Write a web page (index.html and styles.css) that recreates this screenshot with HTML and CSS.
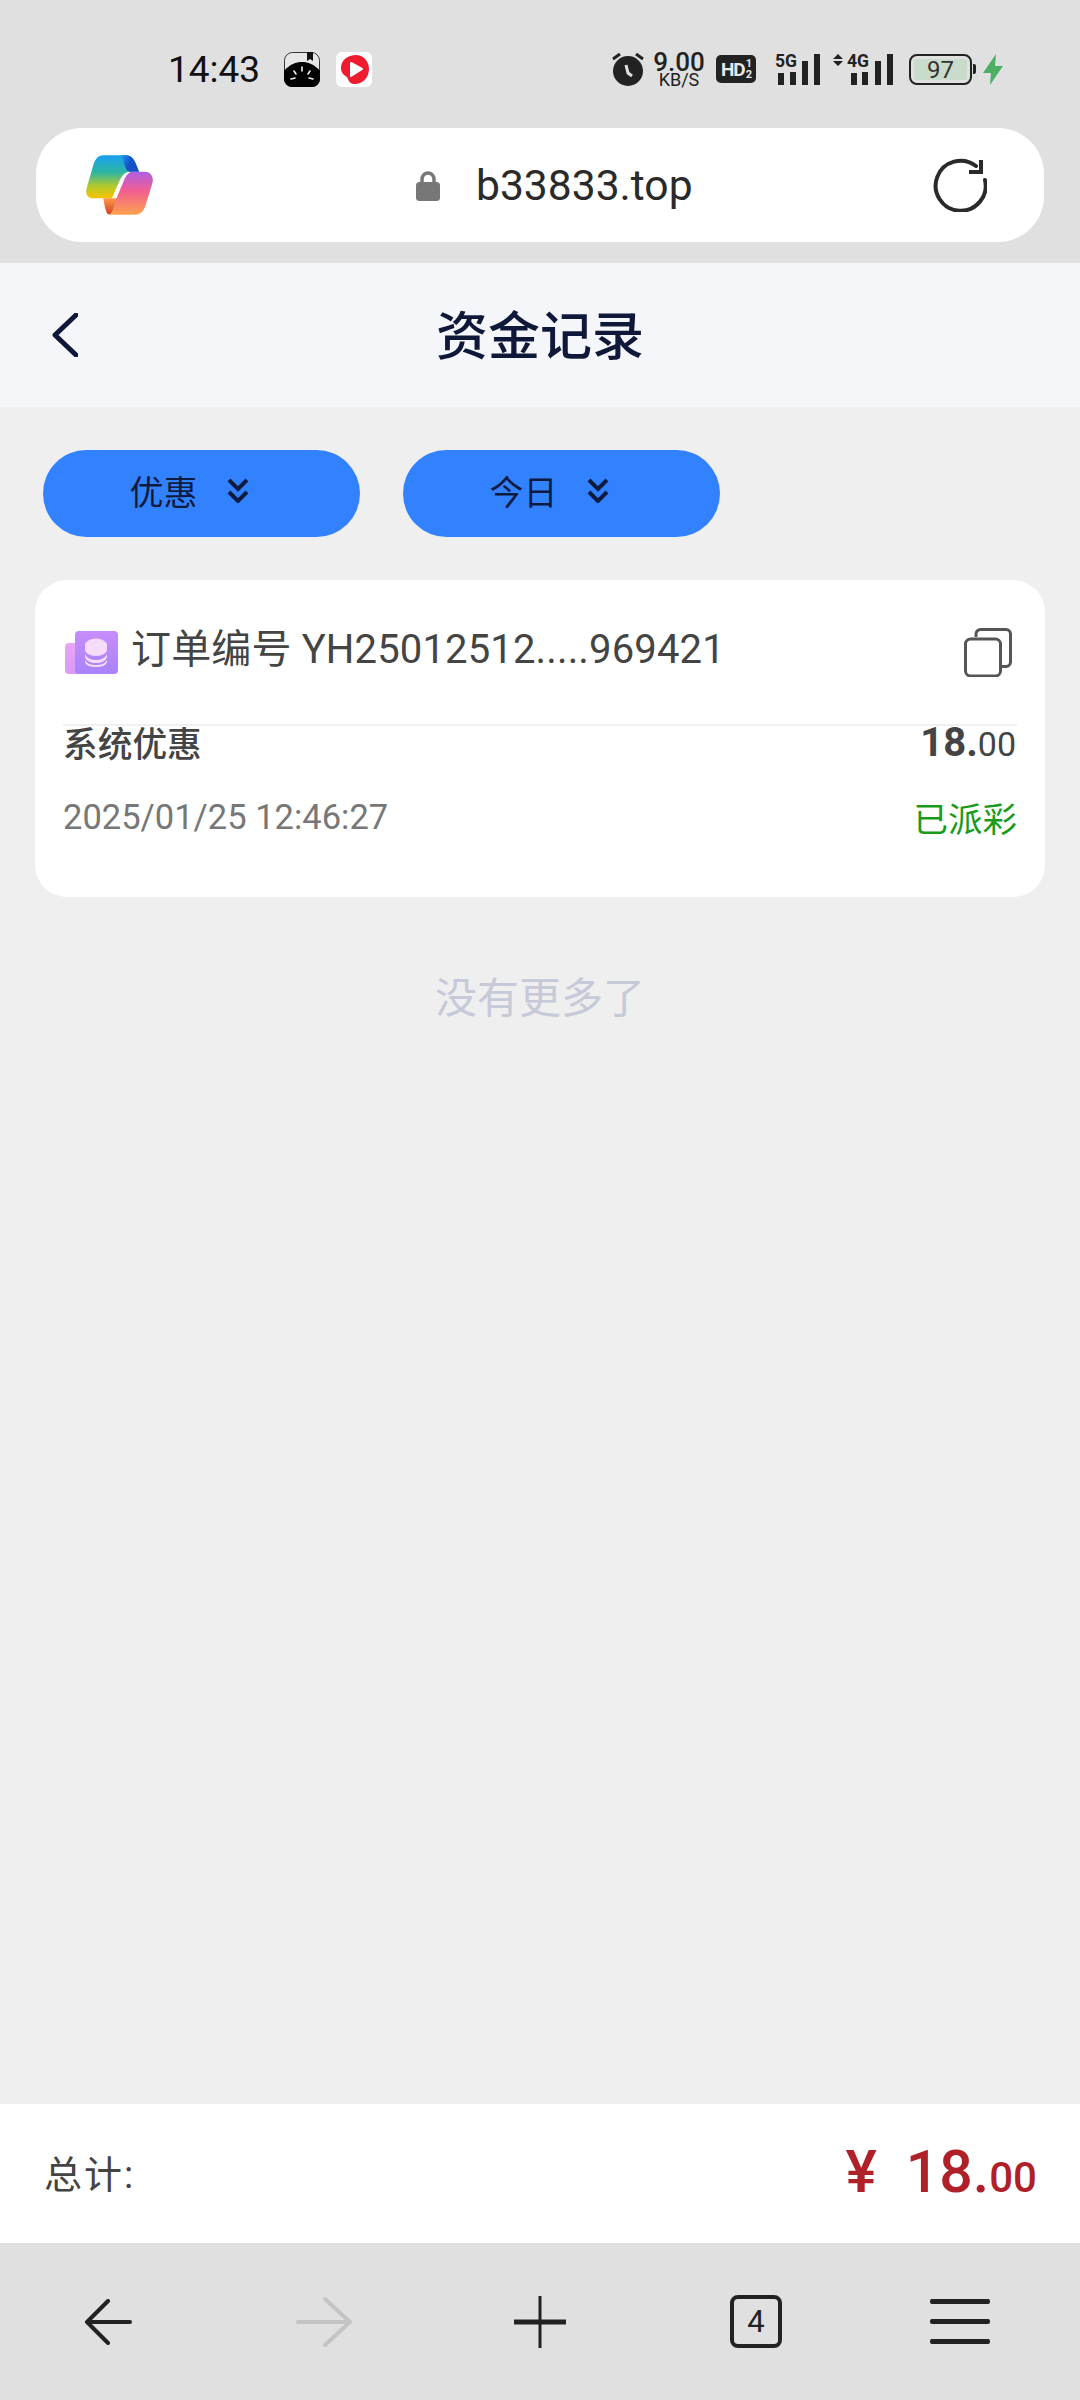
FILE: index.html
```html
<!DOCTYPE html>
<html lang="zh-CN">
  <head>
    <meta charset="UTF-8" />
    <meta name="viewport" content="width=device-width, initial-scale=1.0" />
    <title>资金记录</title>
    <link rel="stylesheet" href="styles.css">
  </head>
  <body>
    <div class="status">
      <span class="time">14:43</span>
      <svg class="app-book" viewBox="0 0 36 35">
        <rect x="0.5" y="0.5" width="35" height="34" rx="8" fill="#e6e6e6" stroke="#333" stroke-width="1" />
        <path d="M23 0h6v9l-3-2-3 2z" fill="#111" />
        <path d="M0 19C6 12 12 10 18 10s12 2 18 9v8a8 8 0 0 1-8 8H8a8 8 0 0 1-8-8z" fill="#000" />
        <path d="M18 15v4M10 19l2 3M26 19l-2 3M7 27l4-1M29 27l-4-1" stroke="#eee" stroke-width="1.6" stroke-linecap="round" />
      </svg>
      <svg class="app-video" viewBox="0 0 36 35">
        <rect width="36" height="35" rx="6" fill="#fff" />
        <path d="M5 16C5 8 12 3 20 3c7 0 13 6 13 14 0 9-7 15-14 15-4 0-6-2-7-5-1-3-3-3-5-5-1-2-2-3-2-6z" fill="#ee1c2e" />
        <path d="M15 11l11 6-11 7z" fill="#fff" stroke="#fff" stroke-width="2" stroke-linejoin="round" />
      </svg>
      <div class="status-right">
        <svg class="alarm" viewBox="0 0 32 34">
          <circle cx="16" cy="19" r="15" fill="#222" />
          <path d="M1 7l7-5M31 7l-7-5" stroke="#222" stroke-width="3" />
          <path d="M14 13l2 8 4 3" stroke="#e0e0e0" stroke-width="3" fill="none" />
        </svg>
        <div class="speed"><span class="speed-num">9.00</span><span class="speed-unit">KB/S</span></div>
        <div class="hd"><span>HD</span><span class="hd-frac"><i>1</i><i>2</i></span></div>
        <svg class="signal-5g" viewBox="0 0 46 32">
          <text x="0" y="14" class="net-label" textLength="22" lengthAdjust="spacingAndGlyphs">5G</text>
          <path d="M3 20h6v12H3zM15 19h6v13h-6zM27 8h6v24h-6zM39 1h6v31h-6z" fill="#222" />
        </svg>
        <svg class="signal-4g" viewBox="0 0 60 32">
          <path d="M5 1l5 5H0zM5 13l5-5H0z" fill="#222" />
          <text x="14" y="14" class="net-label" textLength="22" lengthAdjust="spacingAndGlyphs">4G</text>
          <path d="M18 20h6v12h-6zM29 19h6v13h-6zM42 8h6v24h-6zM54 1h6v31h-6z" fill="#222" />
        </svg>
        <div class="battery"><div class="battery-body"><span>97</span></div><div class="battery-tip"></div></div>
        <svg class="bolt" viewBox="0 0 20 31">
          <path d="M13 0L0 19h8l-1 12 13-19h-8z" fill="#4caf63" />
        </svg>
      </div>
    </div>

    <div class="browser-bar">
      <div class="url-pill">
        <svg class="copilot" viewBox="78 75 202 180">
          <defs>
            <linearGradient id="cpLeft" x1="0" y1="0" x2="0" y2="1">
              <stop offset="0" stop-color="#18a0f4" />
              <stop offset="0.4" stop-color="#2db6a0" />
              <stop offset="0.72" stop-color="#b4c92c" />
              <stop offset="1" stop-color="#f5c400" />
            </linearGradient>
            <linearGradient id="cpRight" x1="0" y1="0" x2="0" y2="1">
              <stop offset="0" stop-color="#b05ee4" />
              <stop offset="0.45" stop-color="#f2608f" />
              <stop offset="1" stop-color="#ffa24c" />
            </linearGradient>
            <linearGradient id="cpTail" x1="0" y1="0" x2="0" y2="1">
              <stop offset="0" stop-color="#ff9a48" />
              <stop offset="1" stop-color="#d83c22" />
            </linearGradient>
            <linearGradient id="cpDark" x1="0" y1="0" x2="1" y2="0.4">
              <stop offset="0" stop-color="#18a0f4" />
              <stop offset="0.6" stop-color="#1650c8" />
              <stop offset="1" stop-color="#1650c8" />
            </linearGradient>
          </defs>
          <path d="M130 75H200C214 75 222 86 228 100L238 125H207C192 128 184 140 178 155L156 205H100C84 205 75 193 80 175L100 105C105 87 115 75 130 75Z" fill="url(#cpLeft)" />
          <path d="M182 75H200C214 75 222 86 228 100L238 125H210C200 122 196 112 193 100C190 88 188 80 182 75Z" fill="url(#cpDark)" />
          <path d="M130 205H172L158 245C154 252 150 255 146 254C138 250 135 232 130 205Z" fill="url(#cpTail)" />
          <path d="M214 125H255C272 125 284 140 278 160L258 225C252 245 240 255 225 255H148C158 250 162 232 170 205L192 152C197 140 203 130 214 125Z" fill="url(#cpRight)" />
        </svg>
        <div class="site">
          <svg class="lock" viewBox="0 0 24 30">
            <path d="M6 13V8a6 6 0 0 1 12 0v5" fill="none" stroke="#777" stroke-width="3.5" />
            <rect y="11" width="24" height="19" rx="3.5" fill="#777" />
          </svg>
          <span class="domain">b33833.top</span>
        </div>
        <svg class="reload" viewBox="0 0 54 54">
          <path d="M52 22A25 25 0 1 1 43 8" fill="none" stroke="#2a2a2a" stroke-width="4" stroke-linecap="round" />
          <path d="M48 2V14H36" fill="none" stroke="#2a2a2a" stroke-width="4" />
        </svg>
      </div>
    </div>

    <header class="page-head">
      <svg class="back" viewBox="0 0 26 44">
        <path d="M24 2L3 22l21 20" fill="none" stroke="#10183a" stroke-width="5" stroke-linecap="round" stroke-linejoin="round" />
      </svg>
      <h1>资金记录</h1>
    </header>

    <main>
      <div class="filters">
        <button class="chip">优惠
          <svg class="chev" viewBox="0 0 22 25"><path d="M2 2l9 9 9-9M2 14l9 9 9-9" fill="none" stroke="#0f1a40" stroke-width="4" /></svg>
        </button>
        <button class="chip">今日
          <svg class="chev" viewBox="0 0 22 25"><path d="M2 2l9 9 9-9M2 14l9 9 9-9" fill="none" stroke="#0f1a40" stroke-width="4" /></svg>
        </button>
      </div>

      <div class="card">
        <div class="card-head">
          <svg class="coin" viewBox="0 0 53 43">
            <defs>
              <linearGradient id="coinBack" x1="0" y1="0" x2="0" y2="1">
                <stop offset="0" stop-color="#e9a6f7" />
                <stop offset="1" stop-color="#d99af8" />
              </linearGradient>
              <linearGradient id="coinFront" x1="0" y1="0" x2="0" y2="1">
                <stop offset="0" stop-color="#c88cf9" />
                <stop offset="1" stop-color="#a883fb" />
              </linearGradient>
            </defs>
            <path d="M14 12H4a4 4 0 0 0-4 4v23a4 4 0 0 0 4 4h14z" fill="url(#coinBack)" />
            <rect x="10" width="43" height="43" rx="4" fill="url(#coinFront)" />
            <ellipse cx="31" cy="14" rx="11" ry="6.5" fill="#f6dcfb" />
            <rect x="20" y="14" width="22" height="5" fill="#f6dcfb" />
            <ellipse cx="31" cy="19" rx="11" ry="6" fill="#f6dcfb" />
            <path d="M20 23c2 4 6 6 11 6s9-2 11-6v3c-1 4-6 6-11 6s-10-2-11-6zM20 29c2 4 6 5 11 5s9-1 11-5v2c-1 4-6 5-11 5s-10-1-11-5z" fill="#f6dcfb" />
          </svg>
          <span class="order-no">订单编号 YH25012512.....969421</span>
          <svg class="copy" viewBox="0 0 48 49">
            <rect x="1.5" y="11" width="35" height="37" rx="5" fill="#fff" stroke="#555" stroke-width="3" />
            <path d="M12 9V6a4.500 4.500 0 0 1 4.500-4.500H42A4.500 4.500 0 0 1 46.500 6v28a4.500 4.500 0 0 1-4.500 4.500H38" fill="none" stroke="#555" stroke-width="3" />
          </svg>
        </div>
        <div class="card-row first">
          <span class="kind">系统优惠</span>
          <span class="amount">18.<small>00</small></span>
        </div>
        <div class="card-row second">
          <span class="date">2025/01/25 12:46:27</span>
          <span class="state">已派彩</span>
        </div>
      </div>

      <p class="no-more">没有更多了</p>
    </main>

    <div class="total">
      <span class="total-label">总计:</span>
      <span class="total-num"><span class="yen">¥</span>18.<small>00</small></span>
    </div>

    <nav class="toolbar">
      <svg class="nav-arrow" viewBox="0 0 48 46"><path d="M24 2L3 23l21 21M3 23h43" fill="none" stroke="#222" stroke-width="4" stroke-linecap="round" stroke-linejoin="round" /></svg>
      <svg class="nav-arrow fwd" viewBox="0 0 56 50"><path d="M29 2l25 23-25 23M2 25h50" fill="none" stroke="#c4c4c4" stroke-width="4" stroke-linecap="round" stroke-linejoin="round" /></svg>
      <svg class="nav-plus" viewBox="0 0 52 52"><path d="M26 0v52" stroke="#222" stroke-width="3" /><path d="M0 26h52" stroke="#222" stroke-width="5" /></svg>
      <div class="tabs">4</div>
      <div class="menu"><span></span><span></span><span></span></div>
    </nav>
  </body>
</html>
```

FILE: styles.css
```css
* {
  margin: 0;
  padding: 0;
  box-sizing: border-box;
}
body {
  width: 1080px;
  height: 2400px;
  display: flex;
  flex-direction: column;
  background-color: #efefef;
  font-family: Roboto, "Noto Sans CJK SC", sans-serif;
  overflow: hidden;
}

/* status bar */
.status {
  height: 128px;
  padding: 10px 77px 0 168px;
  display: flex;
  align-items: center;
  background-color: #e0e0e0;
  color: #222;
}
.time {
  width: 91px;
  font-size: 37px;
  color: #111;
}
.app-book {
  width: 36px;
  height: 35px;
  margin-left: 25px;
}
.app-video {
  width: 36px;
  height: 35px;
  margin-left: 16px;
}
.status-right {
  margin-left: auto;
  display: flex;
  align-items: center;
}
.alarm {
  width: 32px;
  height: 34px;
}
.speed {
  width: 48px;
  margin-left: 11px;
  display: flex;
  flex-direction: column;
  align-items: center;
  font-weight: 500;
}
.speed-num {
  font-size: 26px;
  line-height: 20px;
}
.speed-unit {
  font-size: 18px;
  line-height: 15px;
  font-weight: 400;
}
.hd {
  width: 40px;
  height: 28px;
  margin-left: 13px;
  display: flex;
  align-items: center;
  justify-content: center;
  gap: 1px;
  background-color: #222;
  border-radius: 5px;
  color: #e8e8e8;
  font-size: 19px;
  font-weight: 700;
  letter-spacing: -1px;
}
.hd-frac {
  display: flex;
  flex-direction: column;
  font-size: 11px;
  line-height: 11px;
}
.hd-frac i {
  font-style: normal;
}
.signal-5g {
  width: 46px;
  height: 32px;
  margin-left: 19px;
  overflow: visible;
}
.signal-4g {
  width: 60px;
  height: 32px;
  margin-left: 12px;
  overflow: visible;
}
.net-label {
  font-size: 19px;
  font-weight: 700;
  fill: #222;
}
.battery {
  width: 67px;
  margin-left: 16px;
  display: flex;
  align-items: center;
  gap: 1px;
}
.battery-body {
  width: 63px;
  height: 31px;
  padding: 3px;
  border: 2px solid #222;
  border-radius: 8px;
}
.battery-body span {
  display: block;
  height: 100%;
  background-color: #c9dccb;
  border-radius: 3px;
  color: #333;
  font-size: 24px;
  line-height: 22px;
  text-align: center;
}
.battery-tip {
  width: 3px;
  height: 10px;
  background-color: #222;
  border-radius: 0 2px 2px 0;
}
.bolt {
  width: 20px;
  height: 31px;
  margin-left: 7px;
}

/* address bar */
.browser-bar {
  height: 135px;
  padding: 0 36px 21px;
  background-color: #e0e0e0;
}
.url-pill {
  height: 114px;
  display: flex;
  align-items: center;
  background-color: #fff;
  border-radius: 46px;
}
.copilot {
  width: 67px;
  height: 60px;
  margin-left: 50px;
}
.site {
  margin-left: 263px;
  display: flex;
  align-items: center;
  gap: 36px;
}
.lock {
  width: 24px;
  height: 30px;
  margin-top: 1px;
}
.domain {
  font-size: 42.6px;
  color: #2a2a2a;
}
.reload {
  width: 54px;
  height: 54px;
  margin-left: auto;
  margin-right: 57px;
}

/* page header */
.page-head {
  height: 144px;
  flex-shrink: 0;
  display: grid;
  grid-template-columns: 1fr auto 1fr;
  align-items: center;
  background-color: #f4f6fa;
}
.back {
  width: 26px;
  height: 44px;
  margin-left: 52px;
}
.page-head h1 {
  margin-bottom: 5px;
  font-size: 52px;
  font-weight: 500;
  color: #10183a;
}

/* list */
main {
  flex: 1;
}
.filters {
  padding: 43px 43px 0;
  display: flex;
  gap: 43px;
}
.chip {
  width: 317px;
  height: 87px;
  padding: 0 25px 6px 0;
  display: flex;
  align-items: center;
  justify-content: center;
  gap: 29px;
  border: none;
  border-radius: 44px;
  background-color: #3282ff;
  color: #0f1a40;
  font-family: inherit;
  font-size: 34px;
}
.chev {
  width: 22px;
  height: 25px;
}
.card {
  height: 317px;
  margin: 43px 35px 0 35px;
  padding: 0 28px;
  background-color: #fff;
  border-radius: 32px;
}
.card-head {
  height: 146px;
  display: flex;
  align-items: center;
  border-bottom: 2px solid #f0f0f0;
}
.coin {
  width: 53px;
  height: 43px;
  margin-left: 2px;
  flex-shrink: 0;
}
.order-no {
  margin-left: 13px;
  margin-bottom: 13px;
  font-size: 40px;
  letter-spacing: 0.15px;
  color: #444;
}
.copy {
  width: 48px;
  height: 49px;
  margin-left: auto;
  margin-right: 5px;
}
.card-row {
  display: flex;
  justify-content: space-between;
  align-items: center;
}
.card-row.first {
  height: 32px;
  padding-right: 1px;
}
.card-row.second {
  height: 40px;
  margin-top: 39px;
}
.kind {
  font-size: 34.7px;
  font-weight: 500;
  color: #444;
}
.amount {
  font-size: 40px;
  font-weight: 700;
  color: #444;
}
.amount small {
  font-size: 34px;
  font-weight: 400;
}
.date {
  font-size: 34.5px;
  color: #777;
}
.state {
  font-size: 34.5px;
  color: #1a9a1a;
}
.no-more {
  margin-top: 74px;
  font-size: 42px;
  line-height: 56px;
  text-align: center;
  color: #c5c9d8;
}

/* total */
.total {
  height: 139px;
  flex-shrink: 0;
  padding: 0 43px 4px 44px;
  display: flex;
  justify-content: space-between;
  align-items: center;
  background-color: #fff;
}
.total-label {
  font-size: 38px;
  letter-spacing: 2px;
  color: #444;
}
.total-num {
  font-size: 59px;
  font-weight: 500;
  color: #b02028;
}
.total-num .yen {
  margin-right: 29px;
}
.total-num small {
  font-size: 42px;
}

/* bottom toolbar */
.toolbar {
  height: 157px;
  flex-shrink: 0;
  display: grid;
  grid-template-columns: repeat(4, 216px) 192px;
  justify-items: center;
  align-items: center;
  background-color: #e0e0e0;
}
.nav-arrow {
  width: 48px;
  height: 46px;
}
.nav-arrow.fwd {
  width: 56px;
  height: 50px;
}
.nav-plus {
  width: 52px;
  height: 52px;
}
.tabs {
  width: 52px;
  height: 53px;
  border: 4px solid #222;
  border-radius: 8px;
  font-size: 31px;
  line-height: 45px;
  text-align: center;
  color: #222;
}
.menu {
  width: 60px;
  display: flex;
  flex-direction: column;
  gap: 15px;
}
.menu span {
  height: 5px;
  background-color: #222;
  border-radius: 2px;
}
```
